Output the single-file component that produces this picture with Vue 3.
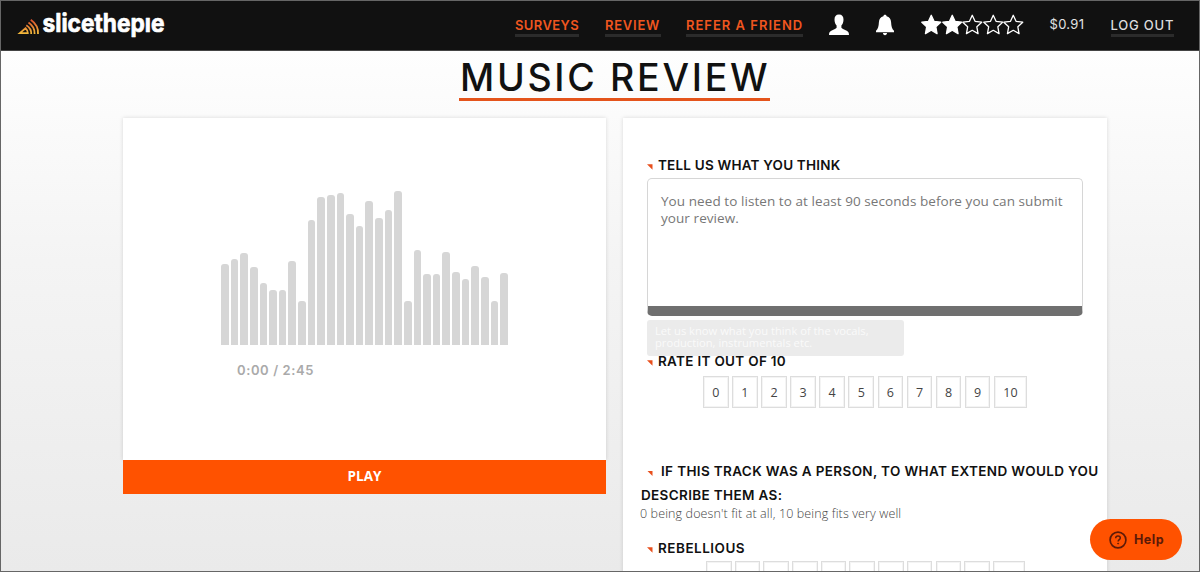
<template>
  <div class="page">
    <header class="topbar">
      <svg class="logo" width="150" height="36" viewBox="0 0 150 36">
        <defs>
          <linearGradient id="pie" gradientUnits="userSpaceOnUse" x1="0" y1="10" x2="0" y2="27">
            <stop offset="0" stop-color="#d9442b" />
            <stop offset="1" stop-color="#f3c33c" />
          </linearGradient>
        </defs>
        <g fill="none" stroke="url(#pie)" stroke-width="1.8">
          <path d="M1.8 25.1 L7.5 20.2 Q9.8 22.5 9.8 25.1 Z" />
          <path d="M8.3 17.3 Q13.5 20.5 13.2 26" />
          <path d="M10.5 14.6 Q17 19 16.6 26" />
          <path d="M12.8 11.8 Q20.7 17.5 20 26" />
        </g>
        <text x="24.5" y="24" textLength="122" lengthAdjust="spacingAndGlyphs">slicethepıe</text>
      </svg>

      <nav class="nav">
        <a class="link surveys">SURVEYS</a>
        <a class="link review">REVIEW</a>
        <a class="link refer">REFER A FRIEND</a>
        <svg class="user" width="22" height="22" viewBox="0 0 22 22">
          <path
            fill="#fff"
            d="M11 0.5c3.1 0 4.6 2 4.5 5.2 0 2.6-1 4.6-2.1 5.9v2.2c.6 1.3 3.4 1.9 5.3 2.9 1.6.8 2.3 2 2.3 4.3H1c0-2.3.7-3.5 2.3-4.3 1.9-1 4.7-1.6 5.3-2.9v-2.2C7.5 10.3 6.5 8.3 6.5 5.7 6.4 2.5 7.9.5 11 .5z"
          />
        </svg>
        <svg class="bell" width="20" height="22" viewBox="0 0 20 22">
          <path
            fill="#fff"
            d="M10 .8c1 0 1.6.6 1.6 1.5 2.8.7 4.3 2.9 4.5 6 .2 4.2.8 6.6 2.9 8.5v1.4H1v-1.4c2.1-1.9 2.7-4.3 2.9-8.5.2-3.1 1.7-5.3 4.5-6C8.4 1.4 9 .8 10 .8zM8 19h4c0 1.4-.8 2.2-2 2.2S8 20.4 8 19z"
          />
        </svg>
        <div class="stars">
          <svg v-for="n in 5" :key="n" width="20.5" height="22" viewBox="0 0 20.5 22">
            <path
              :fill="n <= 2 ? '#fff' : 'none'"
              stroke="#fff"
              stroke-width="1.3"
              stroke-linejoin="round"
              d="M10.250 1.3l2.8 6 6.7.9-4.9 4.6 1.2 6.8-5.8-3.3-5.8 3.3 1.2-6.8L.8 8.2l6.7-.9z"
            />
          </svg>
        </div>
        <span class="balance">$0.91</span>
        <a class="link logout">LOG OUT</a>
      </nav>
    </header>

    <h1 class="title"><span>MUSIC REVIEW</span></h1>

    <main class="columns">
      <section class="player">
        <div class="track card">
          <div class="wave">
            <i v-for="(h, i) in bars" :key="i" :style="{ height: h / 3 + 'px' }"></i>
          </div>
          <div class="time">0:00 / 2:45</div>
        </div>
        <button class="play"><span>PLAY</span></button>
      </section>

      <section class="form card">
        <h2 class="heading think"><i class="tick"></i><span>TELL US WHAT YOU THINK</span></h2>
        <div class="review-box">
          <span>You need to listen to at least 90 seconds before you can submit</span><br />
          <span>your review.</span>
        </div>
        <div class="hint">
          <span>Let us know what you think of the vocals,</span><br />
          <span>production, instrumentals etc.</span>
        </div>
        <h2 class="heading rate"><i class="tick"></i><span>RATE IT OUT OF 10</span></h2>
        <div class="scores">
          <span v-for="n in scores" :key="n" class="score">{{ n }}</span>
        </div>

        <div class="person">
          <i class="tick"></i><span>IF THIS TRACK WAS A PERSON, TO WHAT EXTEND WOULD YOU</span><br />
          <span>DESCRIBE THEM AS:</span>
        </div>
        <p class="note">0 being doesn't fit at all, 10 being fits very well</p>
        <h2 class="heading trait"><i class="tick"></i><span>REBELLIOUS</span></h2>
        <div class="scores small">
          <span v-for="n in scores" :key="n" class="score"></span>
        </div>
      </section>
    </main>

    <button class="help">
      <svg width="18" height="18" viewBox="0 0 18 18" fill="none" stroke="#5c1a08">
        <circle cx="9" cy="9" r="7.9" stroke-width="1.7" />
        <path d="M6.7 7.2c0-1.4 1-2.2 2.3-2.2s2.3.8 2.3 2c0 1.6-2.2 1.7-2.2 3.4" stroke-width="1.5" />
        <circle cx="9.1" cy="12.6" r=".5" fill="#5c1a08" stroke-width=".9" />
      </svg>
      <span>Help</span>
    </button>
  </div>
</template>

<script setup>
const scores = [0, 1, 2, 3, 4, 5, 6, 7, 8, 9, 10]

const bars = [
  243, 256, 275, 232, 184, 165, 165, 251, 130, 373, 443, 449, 456, 392, 355, 432, 379, 403, 461, 130,
  283, 211, 211, 278, 218, 197, 237, 202, 130, 215,
]
</script>

<style>
body {
  margin: 0;
  overflow: hidden;
}
</style>

<style scoped>
* {
  box-sizing: border-box;
}
.page {
  position: relative;
  width: 1200px;
  height: 572px;
  overflow: hidden;
  border: 1px solid #666;
  background: linear-gradient(#fefefe 50px, #f4f4f4 260px, #eaeaea 570px);
  font-family: Inter, 'Liberation Sans', sans-serif;
  color: #111;
}
.topbar {
  display: flex;
  height: 50px;
  background: #111;
  border-bottom: 1px solid #444;
}
.logo {
  overflow: visible;
  margin: 7px 0 0 17px;
}
.logo text {
  font-family: Inter, sans-serif;
  font-size: 25px;
  font-weight: 700;
  fill: #fff;
  stroke: #fff;
  stroke-width: 0.7px;
  stroke-linejoin: round;
}
.nav {
  display: flex;
  flex: 1;
  align-items: flex-start;
  margin-left: 347px;
  white-space: nowrap;
}
.link {
  flex: none;
  height: 22px;
  margin-top: 14px;
  border-bottom: 3px solid #2b2b2b;
  color: #f0561f;
  font-size: 13px;
  font-weight: 600;
  line-height: 20px;
}
.surveys {
  width: 64px;
  letter-spacing: 0.4px;
}
.review {
  width: 56px;
  margin-left: 26px;
  letter-spacing: 0.75px;
}
.refer {
  width: 117px;
  margin-left: 25px;
  letter-spacing: 1px;
}
.user {
  flex: none;
  margin: 13px 0 0 25px;
}
.bell {
  flex: none;
  margin: 13px 0 0 25px;
}
.stars {
  display: flex;
  flex: none;
  margin: 13px 0 0 26px;
}
.balance {
  flex: none;
  width: 37px;
  margin: 14px 0 0 26px;
  font-size: 13px;
  line-height: 18px;
  letter-spacing: 0.3px;
  color: #e2e2e2;
}
.logout {
  width: 63px;
  margin: 14px 0 0 24px;
  color: #ddd;
  font-weight: 500;
  letter-spacing: 0.8px;
}
.title {
  display: flex;
  width: 311px;
  height: 45px;
  margin: 5px 0 0 458px;
  padding-left: 1px;
  border-bottom: 3px solid #e4541b;
  font-size: 37.5px;
  font-weight: 500;
  line-height: 44px;
  letter-spacing: 2.7px;
  white-space: nowrap;
}
.columns {
  display: flex;
  gap: 17px;
  margin: 17px 0 0 122px;
}
.card {
  background: #fff;
  box-shadow: 0 0 4px rgba(0, 0, 0, 0.14);
}
.player {
  width: 483px;
}
.track {
  height: 342px;
  padding-top: 72px;
}
.wave {
  display: flex;
  justify-content: space-between;
  align-items: flex-end;
  width: 287px;
  height: 154.5px;
  margin-left: 98px;
}
.wave i {
  width: 7.7px;
  border-radius: 3px 3px 0 0;
  background: #d6d6d6;
}
.time {
  margin: 16px 0 0 114px;
  font-size: 13px;
  font-weight: 600;
  line-height: 18px;
  letter-spacing: 0.6px;
  color: #aaa;
}
.play {
  display: block;
  width: 100%;
  height: 34px;
  padding: 0 0 2px;
  border: 0;
  background: #ff5200;
  color: #fff;
  font-family: 'Open Sans', sans-serif;
  font-size: 13.5px;
  font-weight: 700;
}
.form {
  width: 484px;
  height: 600px;
  padding: 37px 0 0 24px;
}
.heading {
  display: flex;
  align-items: center;
  height: 20px;
  margin: 0;
  font-size: 13.5px;
  font-weight: 600;
  line-height: 20px;
  white-space: nowrap;
}
.tick {
  display: inline-block;
  flex: none;
  width: 5.5px;
  height: 5.5px;
  margin-right: 5.5px;
  background: #e84f1c;
  clip-path: polygon(0 0, 100% 0, 100% 100%);
}
.heading .tick {
  margin-top: 4px;
}
.think {
  letter-spacing: 0.2px;
}
.review-box {
  width: 436px;
  height: 138px;
  margin-top: 3px;
  padding: 14px 13px;
  border: 1px solid #d6d6d6;
  border-bottom: 10px solid #6f6f6f;
  border-radius: 5px;
  color: #777;
  font-family: 'Open Sans', sans-serif;
  font-size: 13.5px;
  line-height: 17px;
  letter-spacing: 0.07px;
  white-space: nowrap;
}
.hint {
  width: 257px;
  height: 36px;
  margin-top: 4px;
  padding: 5px 8px;
  border-radius: 3px;
  background: #ebebeb;
  color: #fafafa;
  font-family: 'Open Sans', sans-serif;
  font-size: 11.2px;
  line-height: 12px;
  white-space: nowrap;
}
.rate {
  margin-top: -5px;
  letter-spacing: 0.3px;
}
.scores {
  display: flex;
  gap: 3.5px;
  margin: 5px 0 0 56px;
}
.score {
  width: 25.6px;
  height: 32px;
  border: 1px solid #ddd;
  outline: 1px solid #f4f4f4;
  outline-offset: -2px;
  text-align: center;
  color: #444;
  font-family: 'Open Sans', sans-serif;
  font-size: 12.5px;
  line-height: 31px;
}
.score:last-child {
  width: 33px;
}
.person {
  margin: 51px 0 0 -6px;
  font-size: 13.5px;
  font-weight: 600;
  line-height: 24px;
  letter-spacing: 0.35px;
  white-space: nowrap;
}
.person .tick {
  margin: 0 8.5px 0 6px;
}
.note {
  margin: -1px 0 0 -7px;
  color: #444;
  font-family: 'Open Sans', sans-serif;
  font-size: 12.5px;
  font-weight: 300;
  line-height: 16px;
  letter-spacing: 0.12px;
  white-space: nowrap;
}
.trait {
  margin-top: 16px;
  letter-spacing: 0.5px;
}
.small {
  gap: 3.2px;
  margin: 3px 0 0 59px;
}
.small .score {
  width: 25.5px;
}
.small .score:last-child {
  width: 32px;
}
.help {
  position: absolute;
  left: 1089px;
  top: 518px;
  display: flex;
  align-items: center;
  gap: 7px;
  width: 92px;
  height: 41px;
  padding: 0 0 0 19px;
  border: 0;
  border-radius: 21px;
  background: #ff5200;
  color: #5c1a08;
  font-family: Inter, sans-serif;
  font-size: 12.5px;
  font-weight: 700;
  letter-spacing: 0.5px;
}
</style>
